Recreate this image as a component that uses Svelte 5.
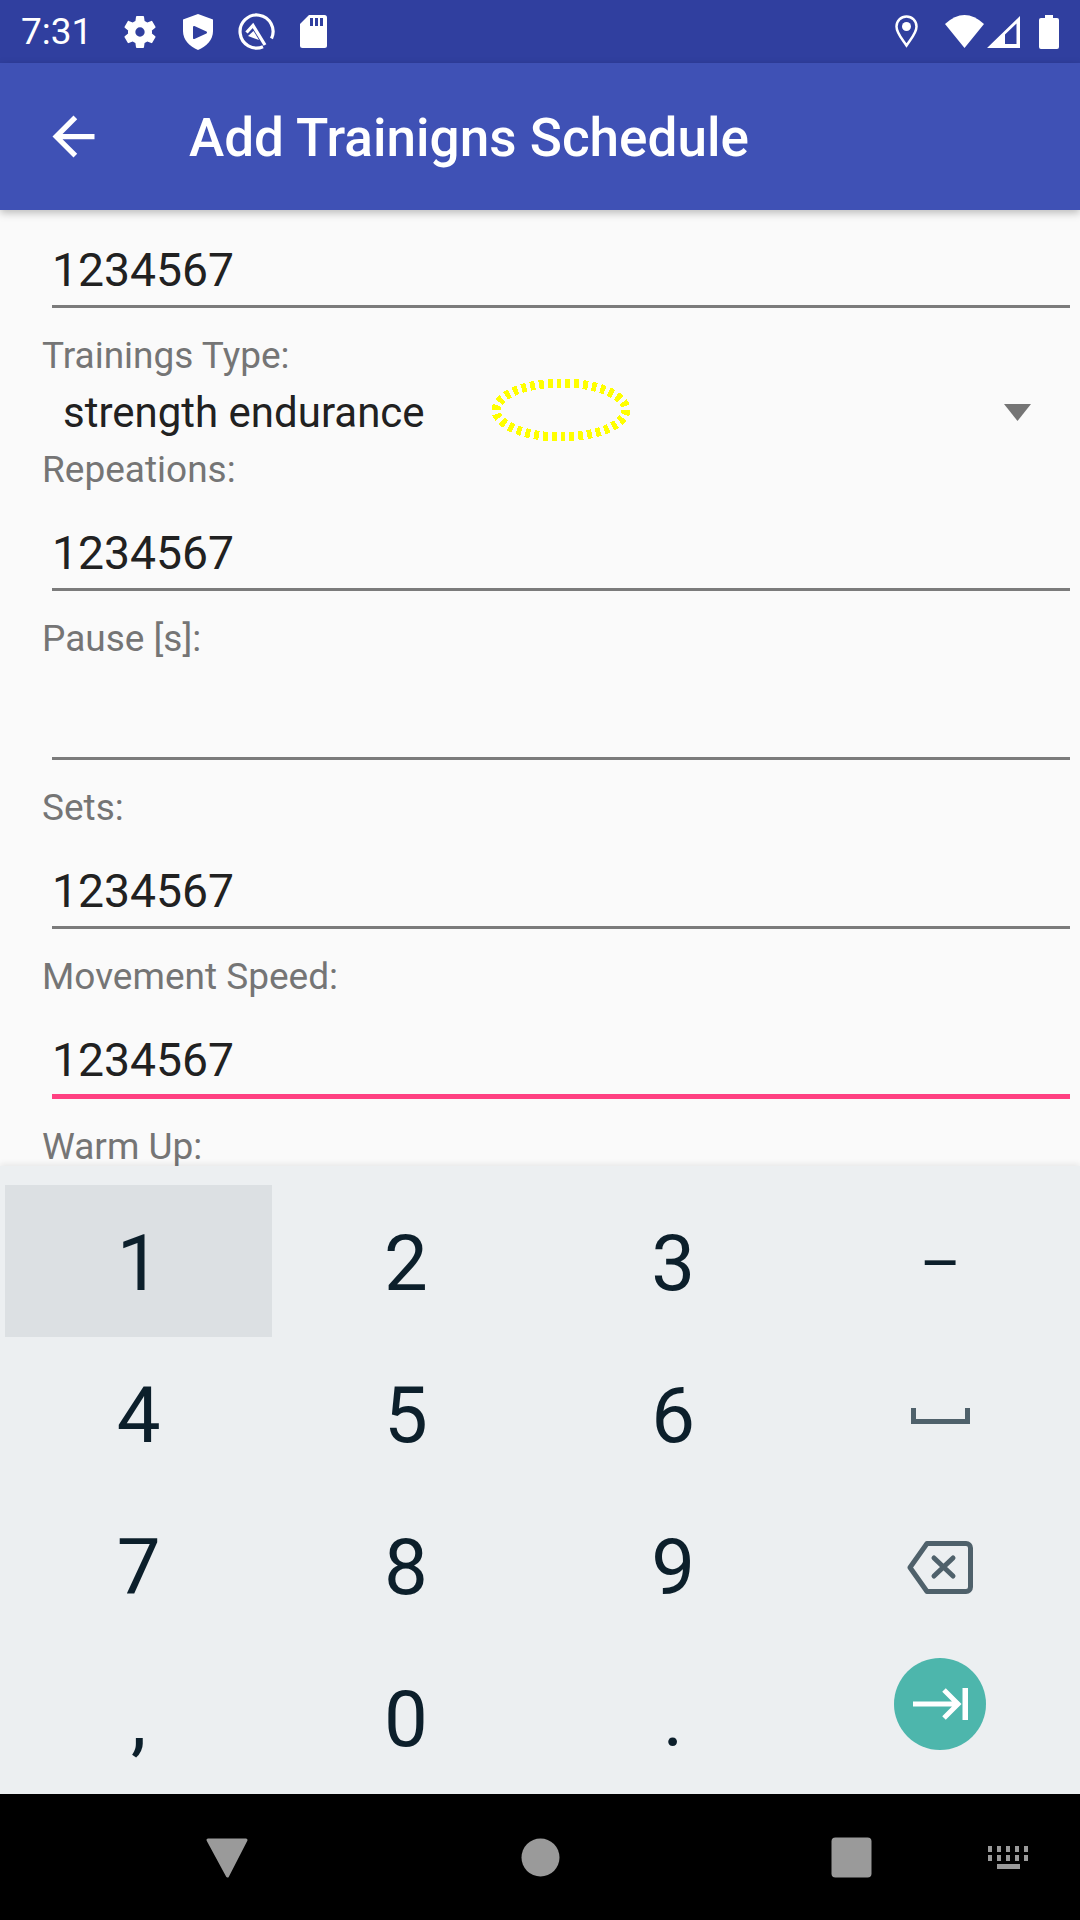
<script>
	// Form rows below the dropdown
	const fields = [
		{ label: 'Repeations:', value: '1234567' },
		{ label: 'Pause [s]:', value: '' },
		{ label: 'Sets:', value: '1234567' },
		{ label: 'Movement Speed:', value: '1234567', focused: true }
	];

	const keys = ['1', '2', '3', '–', '4', '5', '6', 'space', '7', '8', '9', 'back', ',', '0', '.', 'next'];
</script>

<div class="screen">
	<div class="status">
		<span class="time">7:31</span>
		<svg class="gear" width="40" height="40" viewBox="0 0 24 24">
			<path fill="#fff" fill-rule="evenodd" d="M19.14 12.94c.04-.3.06-.61.06-.94 0-.32-.02-.64-.07-.94l2.03-1.58a.49.49 0 0 0 .12-.61l-1.92-3.32a.488.488 0 0 0-.59-.22l-2.39.96c-.5-.38-1.03-.7-1.62-.94l-.36-2.54a.484.484 0 0 0-.48-.41h-3.84c-.24 0-.43.17-.47.41l-.36 2.54c-.59.24-1.13.57-1.62.94l-2.39-.96c-.22-.08-.47 0-.59.22L2.74 8.87c-.12.21-.08.47.12.61l2.03 1.58c-.05.3-.09.63-.09.94s.02.64.07.94l-2.03 1.58a.49.49 0 0 0-.12.61l1.92 3.32c.12.22.37.29.59.22l2.39-.96c.5.38 1.03.7 1.62.94l.36 2.54c.05.24.24.41.48.41h3.84c.24 0 .44-.17.47-.41l.36-2.54c.59-.24 1.13-.56 1.62-.94l2.39.96c.22.08.47 0 .59-.22l1.92-3.32c.12-.22.07-.47-.12-.61l-2.01-1.58zM12 14.8a2.8 2.8 0 1 0 0-5.6 2.8 2.8 0 0 0 0 5.6z"/>
		</svg>
		<svg class="shield" width="30" height="36" viewBox="0 0 30 36">
			<path fill="#fff" d="M15 0L30 5.5V17C30 26 23.5 32.5 15 36 6.5 32.5 0 26 0 17V5.5z"/>
			<path fill="#303f9f" stroke="#303f9f" stroke-width="2" stroke-linejoin="round" d="M11 13L23 18.5 11 24z"/>
		</svg>
		<svg class="q" width="37" height="37" viewBox="0 0 37 37">
			<path fill="none" stroke="#fff" stroke-width="3.2" d="M25 33.7A16.5 16.5 0 1 1 33.5 25.5"/>
			<path fill="none" stroke="#fff" stroke-width="3.2" d="M8.5 19.5L15 12.5 27 32"/>
			<path fill="#fff" d="M10 23L15.5 18 21 27z"/>
		</svg>
		<svg class="sd" width="27" height="33" viewBox="0 0 27 33">
			<path fill="#fff" d="M9 0H24.5A2.5 2.5 0 0 1 27 2.5V30.5A2.5 2.5 0 0 1 24.5 33H2.5A2.5 2.5 0 0 1 0 30.5V9z"/>
			<path fill="#303f9f" d="M10 3h3v8h-3zM15 3h3v8h-3zM20 3h3v8h-3z"/>
		</svg>
		<span class="spacer"></span>
		<svg class="pin" width="23" height="33" viewBox="0 0 23 33">
			<path fill="none" stroke="#fff" stroke-width="2.5" d="M11.5 30.5C8 25 1.5 18.5 1.5 11.5a10 10 0 0 1 20 0C21.5 18.5 15 25 11.5 30.5z"/>
			<circle cx="11.5" cy="11.5" r="4.5" fill="#fff"/>
		</svg>
		<svg class="wifi" width="39" height="33" viewBox="0 0 39 33">
			<path fill="#fff" d="M0 9Q19.5-9 39 9L19.5 33z"/>
		</svg>
		<svg class="signal" width="33" height="32" viewBox="0 0 33 32">
			<path fill="#fff" fill-rule="evenodd" d="M0 32L33 0V32zM18 28H29.5V7.5L18 18.5z"/>
		</svg>
		<svg class="battery" width="20" height="34" viewBox="0 0 20 34">
			<path fill="#fff" d="M6 0h8v3h4a2 2 0 0 1 2 2v27a2 2 0 0 1-2 2H2a2 2 0 0 1-2-2V5a2 2 0 0 1 2-2h4z"/>
		</svg>
	</div>

	<div class="appbar">
		<svg class="back" width="63" height="63" viewBox="0 0 24 24">
			<path fill="#fff" d="M20 11H7.83l5.59-5.59L12 4l-8 8 8 8 1.41-1.41L7.83 13H20v-2z"/>
		</svg>
		<span class="title">Add Trainigns Schedule</span>
	</div>

	<div class="form">
		<div class="input first">1234567</div>

		<div class="field">
			<div class="label">Trainings Type:</div>
			<div class="spinner">
				<span>strength endurance</span>
				<svg width="27" height="17" viewBox="0 0 27 17">
					<path fill="#757575" d="M0 0H27L13.5 17z"/>
				</svg>
			</div>
			<svg class="ring" width="140" height="68" viewBox="0 0 140 68">
				<ellipse cx="70" cy="34" rx="65" ry="27" fill="none" stroke="#ffff00" stroke-width="9" pathLength="34" stroke-dasharray="0.55 0.45" shape-rendering="crispEdges"/>
			</svg>
		</div>

		{#each fields as f, i}
			<div class="field" class:tight={i === 0}>
				<div class="label">{f.label}</div>
				<div class="input" class:focused={f.focused}>{f.value}</div>
			</div>
		{/each}

		<div class="field">
			<div class="label last">Warm Up:</div>
		</div>
	</div>

	<div class="keyboard">
		{#each keys as k, i}
			<div class="key" class:pressed={i === 0} class:dash={k === '–'}>
				{#if k === 'space'}
					<svg width="59" height="16" viewBox="0 0 59 16">
						<path fill="none" stroke="#4f616b" stroke-width="5" d="M2.5 0V13.5H56.5V0"/>
					</svg>
				{:else if k === 'back'}
					<svg width="66" height="53" viewBox="0 0 66 53">
						<path fill="none" stroke="#4f616b" stroke-width="5" stroke-linejoin="round" d="M20 2.5H59A4.5 4.5 0 0 1 63.5 7V46A4.5 4.5 0 0 1 59 50.5H20L3 26.5z"/>
						<path fill="none" stroke="#4f616b" stroke-width="5" stroke-linecap="round" d="M27 17L46 35M46 17L27 35"/>
					</svg>
				{:else if k === 'next'}
					<div class="next">
						<svg width="55" height="32" viewBox="0 0 55 32">
							<path fill="none" stroke="#fff" stroke-width="5" d="M0 16H44M31 2L45 16 31 30"/>
							<path fill="#fff" d="M49.5 0H55V32H49.5z"/>
						</svg>
					</div>
				{:else}
					{k}
				{/if}
			</div>
		{/each}
	</div>

	<div class="nav">
		<svg class="nav-back" width="63" height="63" viewBox="0 0 63 63">
			<path fill="#9a9a9a" stroke="#9a9a9a" stroke-width="3" stroke-linejoin="round" d="M12 14H50L31.5 50z"/>
		</svg>
		<svg class="nav-home" width="63" height="63" viewBox="0 0 63 63">
			<circle cx="31.5" cy="31.5" r="19" fill="#9a9a9a"/>
		</svg>
		<svg class="nav-recent" width="63" height="63" viewBox="0 0 63 63">
			<rect x="11.5" y="11.5" width="40" height="40" rx="4" fill="#9a9a9a"/>
		</svg>
		<svg class="nav-kbd" width="41" height="23" viewBox="0 0 41 23">
			<path fill="#9a9a9a" d="M0 0h4v6H0zM9 0h4v6H9zM18 0h4v6h-4zM27 0h4v6h-4zM36 0h4v6h-4zM0 9h4v6H0zM9 9h4v6H9zM18 9h4v6h-4zM27 9h4v6h-4zM36 9h4v6h-4zM9 18h23v5H9z"/>
		</svg>
	</div>
</div>

<style>
	:global(body) {
		margin: 0;
		font-family: Roboto, sans-serif;
	}

	.screen {
		width: 1080px;
		height: 1920px;
		display: flex;
		flex-direction: column;
		background: #fafafa;
		overflow: hidden;
	}

	.status {
		height: 63px;
		flex: none;
		background: #303f9f;
		display: flex;
		align-items: center;
		padding: 0 21px;
		box-sizing: border-box;
		color: #fff;
	}

	.time {
		font-size: 37px;
		width: 97px;
	}

	.gear { margin-left: 2px; }
	.shield { margin-left: 23px; }
	.q { margin-left: 25px; }
	.sd { margin-left: 25px; }
	.spacer { flex: 1; }
	.wifi { margin-left: 27px; }
	.signal { margin-left: 3px; }
	.battery { margin-left: 19px; }

	.appbar {
		height: 147px;
		flex: none;
		background: #3f51b5;
		display: flex;
		align-items: center;
		padding-left: 42px;
		box-sizing: border-box;
		box-shadow: 0 3px 8px rgba(0, 0, 0, 0.25);
		position: relative;
		z-index: 1;
	}

	.title {
		margin-left: 84px;
		padding-top: 3px;
		color: #fff;
		font-size: 53.1px;
		font-weight: 500;
	}

	.form {
		flex: 1;
		min-height: 0;
	}

	.field {
		padding-top: 25px;
		position: relative;
	}

	.field.tight {
		padding-top: 0;
	}

	.label {
		height: 43px;
		line-height: 45px;
		margin-left: 42px;
		font-size: 37px;
		color: #757575;
	}

	.input {
		height: 101px;
		box-sizing: border-box;
		margin: 0 10px 0 52px;
		border-bottom: 3px solid #7b7b7b;
		font-size: 46.3px;
		line-height: 47px;
		color: #212121;
		padding-top: 40px;
	}

	.input.first {
		height: 98px;
		padding-top: 37px;
	}

	.input.focused {
		height: 102px;
		border-bottom: 5px solid #ff4081;
	}

	.spinner {
		height: 71px;
		display: flex;
		align-items: center;
		justify-content: space-between;
		padding: 2px 49px 0 63px;
		box-sizing: border-box;
		font-size: 42px;
		color: #212121;
	}

	.ring {
		position: absolute;
		left: 491px;
		top: 68px;
	}

	.keyboard {
		height: 628px;
		flex: none;
		background: #eceff1;
		box-sizing: border-box;
		padding: 19px 6px 0 5px;
		display: grid;
		grid-template-columns: repeat(4, 1fr);
		grid-auto-rows: 152px;
		box-shadow: 0 -2px 6px rgba(0, 0, 0, 0.08);
		position: relative;
	}

	.key {
		display: flex;
		align-items: center;
		justify-content: center;
		box-sizing: border-box;
		padding-top: 5px;
		font-size: 78px;
		color: #0c1f2b;
	}

	.key.pressed {
		background: #dce0e3;
	}

	.key.dash {
		font-size: 63px;
	}

	.next {
		width: 92px;
		height: 92px;
		margin-bottom: 31px;
		border-radius: 50%;
		background: #4db6ac;
		display: flex;
		align-items: center;
		justify-content: center;
	}

	.nav {
		height: 126px;
		flex: none;
		background: #000;
		display: flex;
		align-items: center;
		padding-left: 196px;
		box-sizing: border-box;
	}

	.nav-home { margin-left: 250px; }
	.nav-recent { margin-left: 248px; }
	.nav-kbd { margin-left: 105px; }
</style>
